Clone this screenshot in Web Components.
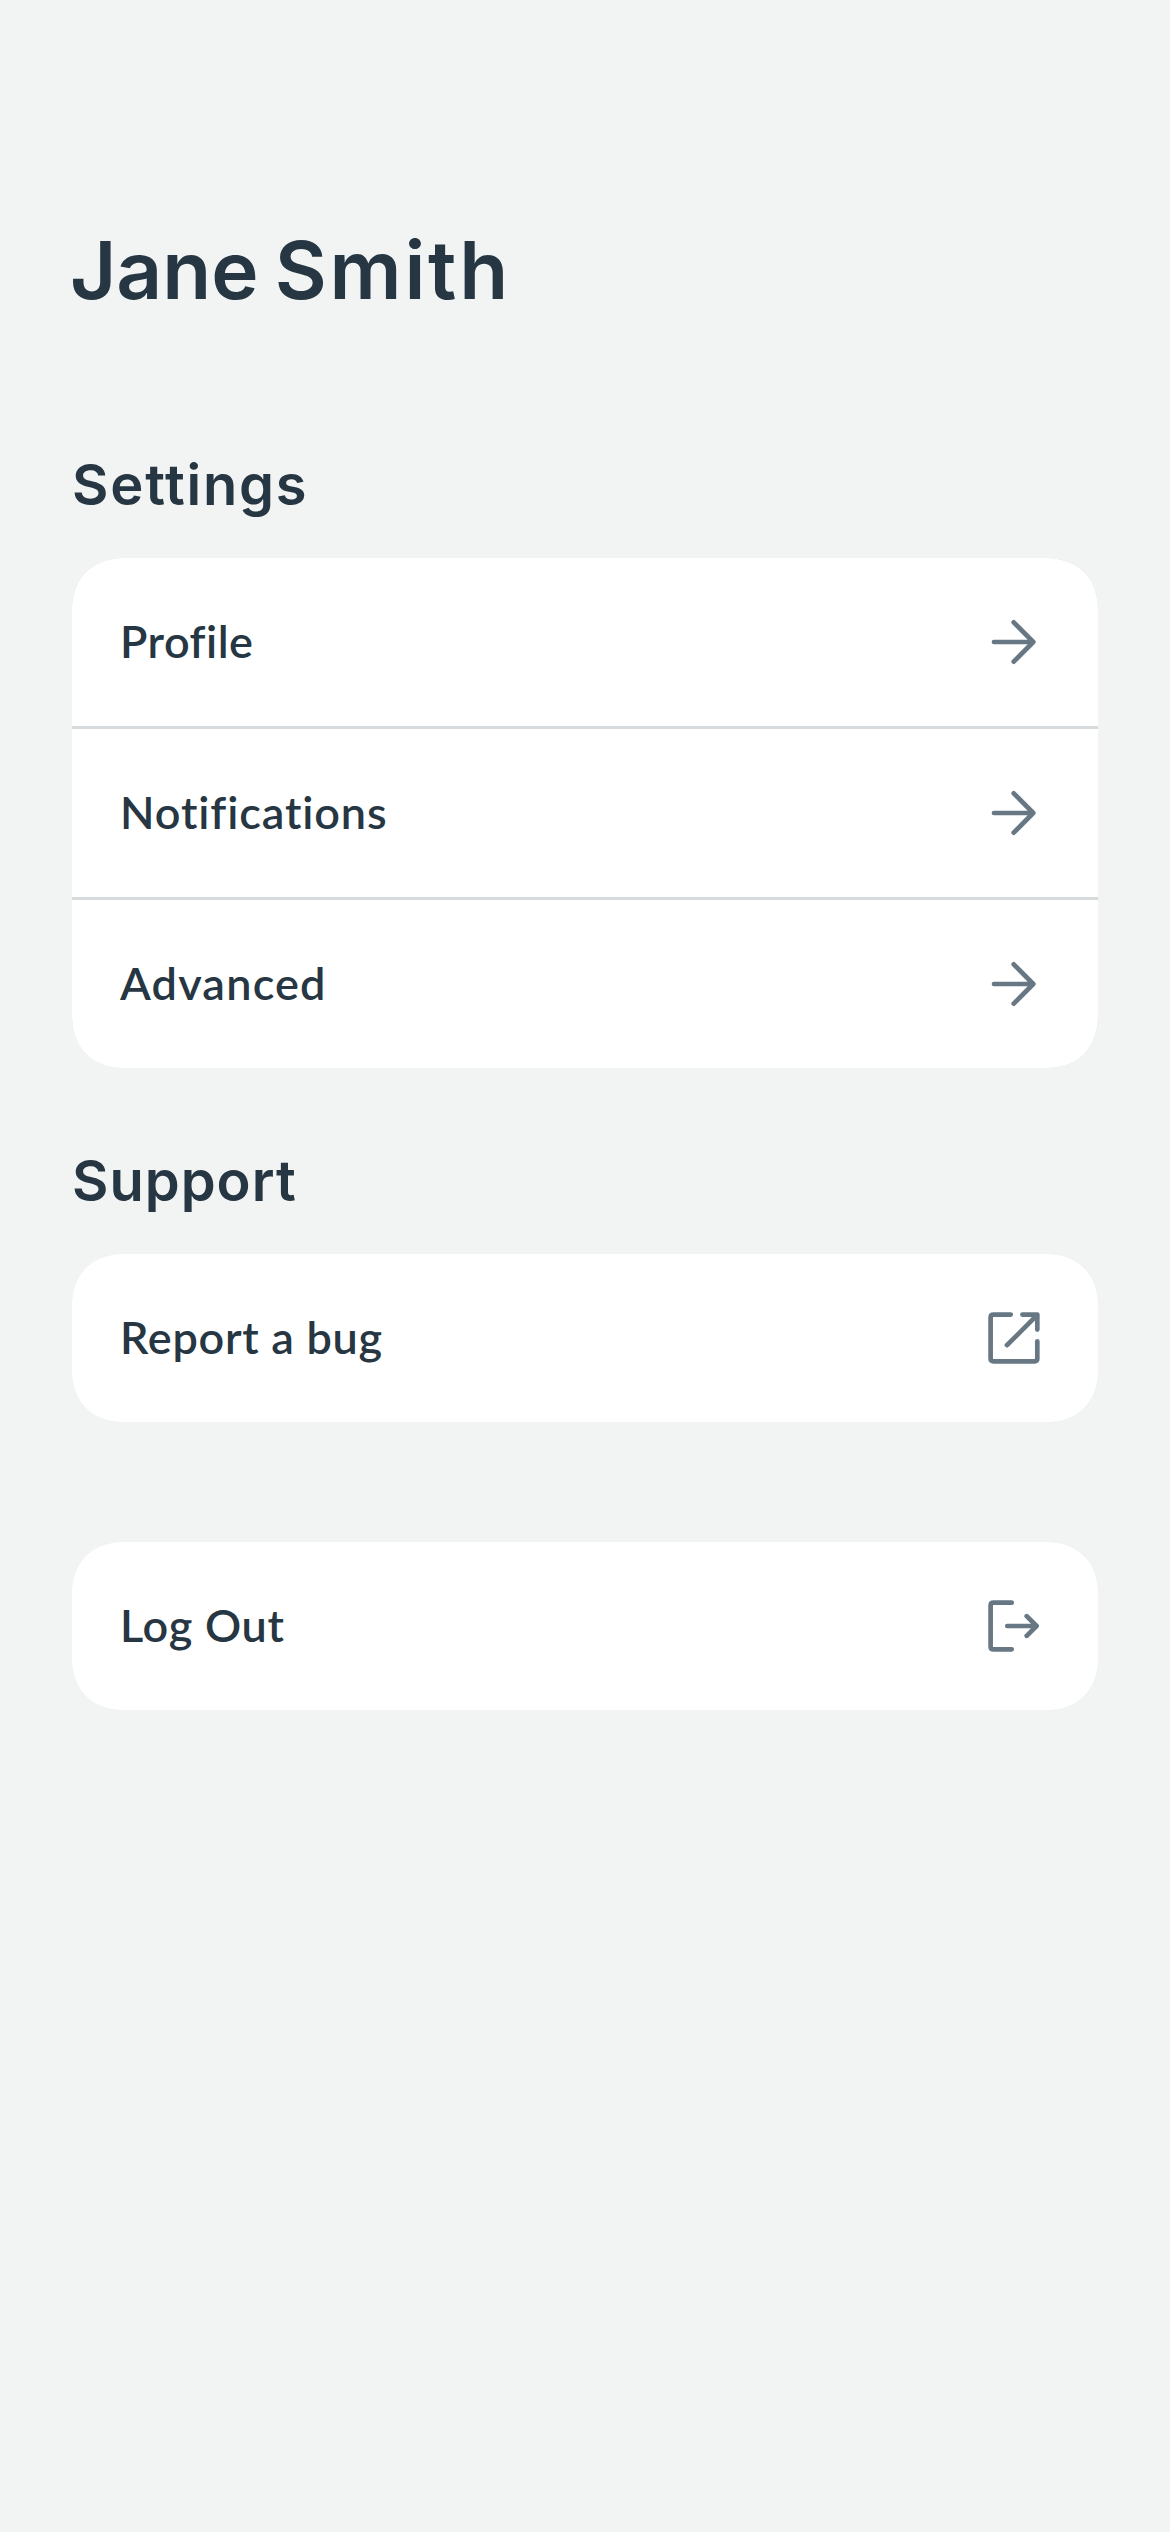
<!DOCTYPE html>
<html lang="en">
<head>
<meta charset="utf-8">
<title>Settings</title>
<style>
  html, body { margin: 0; background: #f1f4f3; }
</style>
</head>
<body>
<account-screen>
  <span slot="name">Jane <span style="letter-spacing:2.8px">Smith</span></span>
  <settings-section>
    <span slot="heading" style="letter-spacing:1.8px">Settings</span>
    <settings-card>
      <settings-row icon="arrow" style="--tracking:.5px">Profile</settings-row>
      <settings-row icon="arrow" style="--tracking:.9px">Notifications</settings-row>
      <settings-row icon="arrow" style="--tracking:1.2px">Advanced</settings-row>
    </settings-card>
  </settings-section>
  <settings-section>
    <span slot="heading" style="letter-spacing:1px">Support</span>
    <settings-card>
      <settings-row icon="external" style="--tracking:.7px">Report a bug</settings-row>
    </settings-card>
  </settings-section>
  <settings-card class="logout">
    <settings-row icon="logout" style="--tracking:.7px">Log Out</settings-row>
  </settings-card>
</account-screen>
<script>
const ICONS = {
  arrow: 'M10 30H49.3M29.7 10.3L49.3 30L29.7 49.7',
  external: 'M26.7 6.6H9.5Q6.6 6.6 6.6 9.5V50.5Q6.6 53.3 9.5 53.3H50.5Q53.3 53.3 53.3 50.5V33.3M38.4 6.6H53.3V21.6M23 37.2L53.3 6.9',
  logout: 'M27.7 6.7H9.5Q6.6 6.7 6.6 9.6V50.4Q6.6 53.3 9.5 53.3H27.7M23.3 30H52.4M42.7 20.2L52.6 30L42.7 39.8'
};

class BaseElement extends HTMLElement {
  constructor() {
    super();
    this.attachShadow({ mode: 'open' });
  }
  connectedCallback() {
    this.shadowRoot.innerHTML = this.render();
  }
}

customElements.define('account-screen', class extends BaseElement {
  render() {
    return `<style>
      :host { display: block; box-sizing: border-box; min-height: 2532px; padding: 222px 72px 0; background: #f1f4f3; color: #263642; font-family: Inter, sans-serif; }
      h1 { margin: 0 0 133px -2px; font-size: 80px; line-height: 96px; font-weight: 600; word-spacing: -4px; white-space: nowrap; }
      main { display: flex; flex-direction: column; }
      ::slotted(settings-section:nth-of-type(2)) { margin-top: 79px; }
      ::slotted(.logout) { margin-top: 120px; }
    </style><h1><slot name="name"></slot></h1><main><slot></slot></main>`;
  }
});

customElements.define('settings-section', class extends BaseElement {
  render() {
    return `<style>
      :host { display: block; }
      h2 { margin: 0 0 39px; font-size: 56px; line-height: 68px; font-weight: 600; }
    </style><h2><slot name="heading"></slot></h2><slot></slot>`;
  }
});

customElements.define('settings-card', class extends BaseElement {
  render() {
    return `<style>
      :host { display: flex; flex-direction: column; gap: 3px; overflow: hidden; border-radius: 54px; corner-shape: superellipse(1.2); background: #d6dadd; }
    </style><slot></slot>`;
  }
});

customElements.define('settings-row', class extends BaseElement {
  render() {
    return `<style>
      :host { display: flex; align-items: center; justify-content: space-between; box-sizing: border-box; height: 168px; padding: 0 54px 0 48px; background: #fff; }
      .label { padding-bottom: 3px; font: 600 45px/54px Lato, sans-serif; font-variant-ligatures: none; letter-spacing: var(--tracking, 0); white-space: nowrap; }
      svg { display: block; width: 60px; height: 60px; fill: none; stroke: #677784; stroke-width: 4.7; stroke-linecap: round; stroke-linejoin: round; }
    </style><span class="label"><slot></slot></span>
    <svg viewBox="0 0 60 60" aria-hidden="true"><path d="${ICONS[this.getAttribute('icon')]}"/></svg>`;
  }
});
</script>
</body>
</html>
